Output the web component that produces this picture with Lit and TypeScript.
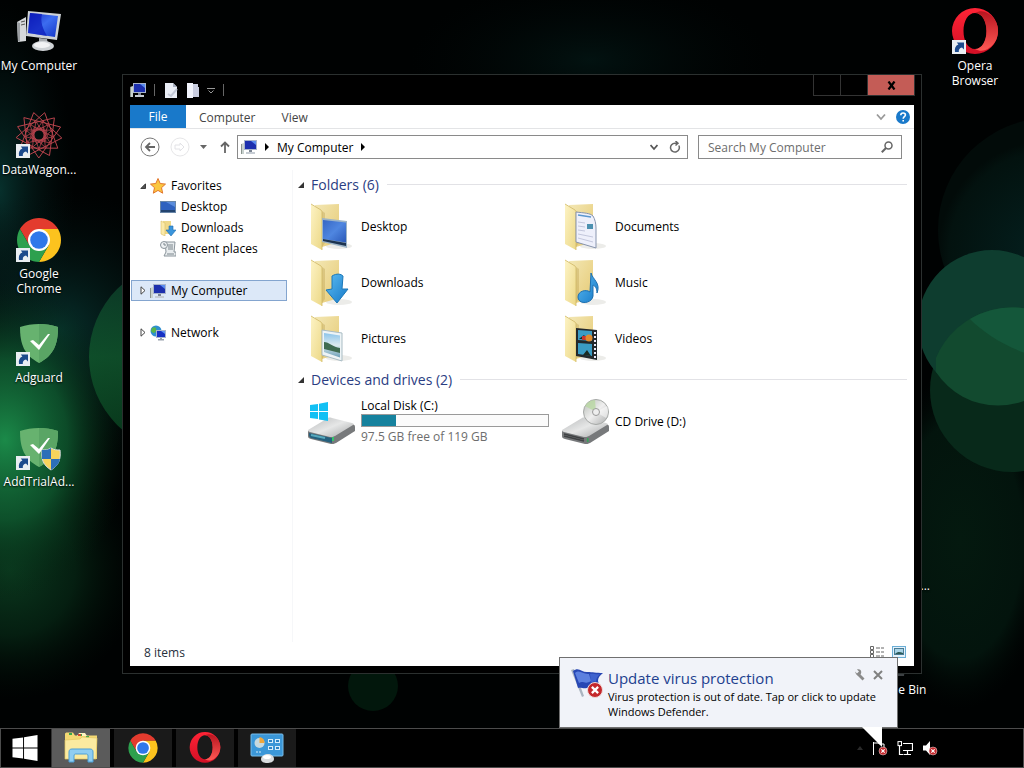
import { LitElement, html, svg, css, TemplateResult } from "lit";
import { customElement } from "lit/decorators.js";

const box = (size: number, view: number, body: unknown) =>
  html`<svg class="ico" width=${size} height=${size} viewBox="0 0 ${view} ${view}" aria-hidden="true">${body}</svg>`;

/* ---------- shared artwork ---------- */

const shortcut = svg`<rect x="1" y="32" width="14" height="14" fill="#e9eef2"/>
  <path d="M4 44c-.6-4 .6-6.600 3.400-7.600L5.800 34.600H13v7l-2-2C8.600 40 7.600 41.400 7.800 44z" fill="#1c4a8c"/>`;

const bigPc = svg`
  <path d="M2 14l9-5v24l-8 1z" fill="#d5d8da"/><path d="M2 14l3 1v19l-2-1z" fill="#9b9fa3"/>
  <path d="M6 14l4-1M6 17l4-1" stroke="#555" stroke-width="1"/>
  <path d="M24 30l8 1 1 6H24z" fill="#a8acb0"/>
  <ellipse cx="28" cy="38" rx="11" ry="5" fill="#cfd3d6"/><ellipse cx="27" cy="37" rx="8" ry="3" fill="#f2f3f4"/>
  <path d="M13 3l33 3-4 26-31-4z" fill="#cdd2d6"/><path d="M15 5l28 3-3 21-27-4z" fill="url(#screen)"/>
  <path d="M15 5l12 1c-2 8 1 15 5 22l-19-3z" fill="#0a18b8" opacity=".7"/>`;

const star = (n: number, step: number, r: number) =>
  Array.from({ length: n + 1 }, (_, i) => {
    const a = (i * step * 2 * Math.PI) / n + 0.13;
    return `${(24 + r * Math.cos(a)).toFixed(1)},${(23 + r * Math.sin(a)).toFixed(1)}`;
  }).join(" ");

const wagon = svg`<g fill="none" stroke="#b8434c">
  <polyline points=${star(13, 4, 23)} stroke-width="1"/>
  <polyline points=${star(13, 5, 14)} stroke-width=".8"/>
  <polyline points=${star(11, 3, 9)} stroke-width=".8"/></g>${shortcut}`;

const chromeMark = svg`<g transform="translate(24 24)">
  <path d="M-19.050-11A22 22 0 0 1 19.050-11H0L-9.530 5.500z" fill="#e33b2e"/>
  <path d="M19.050-11A22 22 0 0 1 0 22L9.530 5.500 0-11z" fill="#fcc31e"/>
  <path d="M0 22A22 22 0 0 1-19.050-11L-9.530 5.500H9.530z" fill="#2da04e"/>
  <circle r="11" fill="#fff"/><circle r="8.800" fill="#2f78ea"/></g>`;

const operaMark = svg`<path fill-rule="evenodd" fill="url(#opera)" d="M24 0a23 23 0 1 0 0 46 23 23 0 0 0 0-46zM24 5c7 0 11.500 8 11.500 18S31 41 24 41s-11.500-8-11.500-18S17 5 24 5z"/>
  <path d="M24 5c5-3 10-2 14 1 6 4 9 10 9 17s-3 13-9 17c-4 3-9 4-14 1 7 0 11.500-8 11.500-18S31 5 24 5z" fill="url(#operaSide)"/>`;

const shield = svg`<path d="M24 4c7 0 13 1 19 3 0 17-4 28-19 36C9 35 5 24 5 7c6-2 12-3 19-3z" fill="#67b26f"/>
  <path d="M24 4c7 0 13 1 19 3 0 17-4 28-19 36z" fill="#5aa565"/>
  <path d="M15 21l3-1 6 5 9-11h2L24 30z" fill="#fff"/>`;

const uac = svg`<path d="M36 24c3 2 6 2 9 2 1 9-1 15-9 20-8-5-10-11-9-20 3 0 6 0 9-2z" fill="#f7d45c" stroke="#d7dde4" stroke-width="1"/>
  <path d="M36 24v11h-9c0-3-.4-6 0-9 3 0 6 0 9-2zM36 35h9c-1 5-4 8-9 11z" fill="#2d6fb8"/>`;

const pc = svg`<path d="M0 5l3-1v11H0z" fill="#c9d2cf"/><path d="M0 5h1v10H0z" fill="#8b9590"/>
  <rect x="3.500" y="1.500" width="12" height="9" fill="#1c2fae" stroke="#a8b4cc"/>
  <path d="M10 2h5v4z" fill="#5a8cf0"/><rect x="8" y="11" width="3" height="2" fill="#7d8694"/>
  <rect x="5" y="13" width="9" height="2" fill="#c6ccd3"/>`;

const folderBase = svg`<ellipse cx="32" cy="44" rx="13" ry="3" fill="#cfcfc8" opacity=".4"/>
  <path d="M8 3l24-1v38l-17 5z" fill="url(#folderBack)"/>
  <path d="M15 9l3 2v30l-3 4z" fill="#b89a48" opacity=".35"/>
  <path d="M4 2l10 6c1 1 1 2 1 4v36L4 42z" fill="url(#folderFront)"/>
  <path d="M4 2l10 6c1 1 1 2 1 4v36" fill="none" stroke="#cfb765" stroke-width=".8"/>`;

const folderArt: Record<string, unknown> = {
  Desktop: svg`<path d="M15 16l25 3v27l-25-6z" fill="#9db4c6"/><path d="M16 18l23 2.500v20L16 37z" fill="url(#desk)"/>
    <path d="M16 37l23 4v3L16 39z" fill="#1c3350"/>`,
  Documents: svg`<path d="M15 10c8 1 14 1 17 4 2 3 3 8 3 12v20l-20-6z" fill="#eef0fb" stroke="#8794ad"/>
    <path d="M17 13l13 2" stroke="#5a97cf" stroke-width="1.500"/><rect x="26" y="22" width="6" height="5" fill="#4d91b0"/>
    <path d="M17 20l7 1M17 24l7 1M17 28l7 1M17 32l15 3M17 36l15 4" stroke="#c3c7dc"/>`,
  Downloads: svg`<path d="M25 18c5-3 9-2 11 0l-1 13h6L30 45 19 32l6-1z" fill="url(#blue)" stroke="#1c78b8"/>`,
  Music: svg`<path d="M30 15c2 7 10 10 6 20 0-5-2-7-4-8v11c-1 8-15 9-15 1 0-6 8-8 12-5z" fill="url(#blue)" stroke="#1c6faf"/>`,
  Pictures: svg`<path d="M15 16l20 3v28l-20-6z" fill="#eef4f6" stroke="#a9bcc4"/><path d="M17 19l16 2.500v22L17 38z" fill="url(#sky)"/>
    <path d="M17 28c5 0 9 5 16 6v5L17 35z" fill="#3f6c52"/>`,
  Videos: svg`<path d="M15 14l21 2v30l-21-4z" fill="#23292c"/><path d="M17 16l14 1v10l-14-1zM17 29l14 1v12l-14-2z" fill="#3a9cc4"/>
    <path d="M18 25l5-4 3 4zM22 41l4-5 4 6z" fill="#1a2b22"/><rect x="21" y="22" width="4" height="4" fill="#c8382e"/><circle cx="28" cy="24" r="3.500" fill="#e08b2c"/>
    <path d="M34 18v26" stroke="#eef" stroke-width="2" stroke-dasharray="2 2"/>`,
};

const driveBody = svg`<path d="M1 34l20-12c1-.6 2-.6 4 0l20 5c2 .6 3 1 3 3v4L29 46c-2 1-3 1-5 1L4 42c-2-.5-3-1-3-3z" fill="#77797b"/>
  <path d="M1 33l20-12c1-.6 2-.6 4 0l20 5c2 .6 2 1.500 1 2L28 39c-2 1-3 1-5 1L3 35c-2-.5-2-1-2-2z" fill="url(#metal)"/>`;

const hardDisk = svg`${driveBody}
  <path d="M2 36l23 5v5L4 41c-2-1-2-2-2-5z" fill="#24607e"/><path d="M4 38l14 3" stroke="#57a9bd" stroke-width="2"/>
  <rect x="25" y="40" width="2" height="4" fill="#36c46a"/>
  <path d="M3 8l8-1v7H3zM12 6.800L21 5v9h-9zM3 15h8v7l-8-1zM12 15h9v9l-9-1.500z" fill="#12c0f4"/>`;

const cdDrive = svg`${driveBody}<path d="M3 37l20 5M3 39l20 5" stroke="#3f4244" stroke-width="1.500"/>
  <rect x="26" y="41" width="1.500" height="4" fill="#36a45a"/>
  <circle cx="35" cy="15" r="12.500" fill="url(#disc)" stroke="#a5a8a6"/><path d="M35 15L24 9c2-3 5-6 10-6z" fill="#b9d8a2" opacity=".8"/>
  <path d="M35 15l11-6c2 4 1 9-1 12z" fill="#fff" opacity=".5"/><circle cx="35" cy="15" r="3.500" fill="#eee" stroke="#999"/>`;

const sideArt: Record<string, unknown> = {
  Favorites: svg`<path d="M8 .5l2.200 5 5.300.6-4 3.600 1.200 5.500L8 12.400l-4.700 2.800 1.200-5.500-4-3.600 5.300-.6z" fill="#fbc740" stroke="#e2762c"/>`,
  Desktop: svg`<rect x=".5" y="2.500" width="15" height="11" fill="#2f62bf" stroke="#6886a8"/><path d="M1 11h14v2H1z" fill="#23446f"/><path d="M6 3h9v5z" fill="#5a8cdc"/>`,
  Downloads: svg`<path d="M3 1h8v13H3z" fill="#efd98a"/><path d="M1 1l4 2v13l-4-2z" fill="#fbeaa8" stroke="#d9bf6a" stroke-width=".6"/>
    <path d="M9 6h4v4h3l-5 6-5-6h3z" fill="#3a95dc" stroke="#1e6db0" stroke-width=".6"/>`,
  "Recent places": svg`<path d="M5 1h10l-1 10h2v4H4l2-4z" fill="#e8ecee" stroke="#8a949b"/><circle cx="4" cy="4" r="3.500" fill="#eef1f3" stroke="#8a949b"/>
    <path d="M4 2v2h2M8 4h5M8 6h5M8 8h5M7 13h7" stroke="#7b858c" fill="none"/>`,
  "My Computer": pc,
  Network: svg`<circle cx="6" cy="6" r="5.500" fill="#2f8fd0"/><path d="M2 3c3-2 5 0 4 3s-4 2-5 0M7 8c3-1 3 2 1 3z" fill="#58b64a"/>
    <rect x="6.500" y="5.500" width="9" height="7" fill="#1730c4" stroke="#a8b4cc"/><path d="M11 6h4v3z" fill="#5f93f4"/><path d="M10 13h2v1h2v1.500H8V14h2z" fill="#9aa2ad"/>`,
};

const badge = (x: number, y: number, r: number) => svg`<g transform="translate(${x} ${y}) scale(${r / 6})">
  <circle r="6" fill="#c4282c" stroke="#efd9d9" stroke-width=".8"/><path d="M-2.500-2.500l5 5m0-5l-5 5" stroke="#fff" stroke-width="1.800"/></g>`;

const explorerMark = svg`<path d="M1 3c0-1 1-1.500 2-1.500h6l2 3H33V28H1z" fill="#f3d873"/>
  <path d="M13 5l2-3h6l2 3z" fill="#fff3c0"/><path d="M5 3h3M15 4h3M22 6h3" stroke="#3aa84a" stroke-width="2"/><path d="M14 4h3" stroke="#d2452e" stroke-width="2"/>
  <path d="M1 9l15-1 2-2 15 1-1 21H1z" fill="#fbeaa0" stroke="#e3c55e" stroke-width=".7"/>
  <path d="M5 31V21c0-2 1-3 3-3h18c2 0 3 1 3 3v10h-5v-6c0-2-1-2-2-2H12c-1 0-2 0-2 2v6z" fill="#8fcdf1" stroke="#4c9fd6"/>`;

const panelMark = svg`<rect x="1" y="3" width="32" height="22" rx="1" fill="#3b97d8" stroke="#79bdea"/>
  <circle cx="9.500" cy="12" r="5" fill="#c7d9df"/><path d="M9.500 12V6a6 6 0 0 1 5 6z" fill="#f0a63a"/>
  <g fill="#2b83c4" stroke="#d5ecfa"><rect x="18.500" y="8.500" width="4" height="3"/><rect x="25.500" y="8.500" width="4" height="3"/><rect x="18.500" y="15.500" width="4" height="3"/><rect x="25.500" y="15.500" width="4" height="3"/></g>
  <path d="M6 21h6" stroke="#d5ecfa" stroke-dasharray="2 1"/>
  <path d="M11 28c0-3 4-5 7-5s6 2 6 5-4 4-7 4-6-1-6-4z" fill="#d9dcde"/><ellipse cx="17" cy="26" rx="4" ry="2" fill="#fff"/>`;

const winMark = svg`<path d="M0 4l11-1.500V13H0zM12 2.300L26 0v13H12zM0 14h11v10.500L0 23zM12 14h14v13l-14-2.300z" fill="#fff"/>`;

const bigFlag = svg`<path d="M0 3l3-1 10 27-2 1z" fill="#aab4c0"/>
  <path d="M2 4c6-5 9 2 15 1 4 0 8 1 15 1-5 4-6 7-4 11-5-2-7 3-12 4-4 1-6-1-9 0z" fill="#2747b4"/>
  <path d="M4 6c5-4 8 2 14 1l2 7c-6 4-8-1-12 2z" fill="#6f93ee" opacity=".75"/>
  <path d="M19 7c3-1 6 1 10 0-3 3-4 5-4 8-2-1-3 0-5 1z" fill="#4a6fd8" opacity=".7"/>${badge(24, 23, 7.5)}`;

/* ---------- data ---------- */

const leftIcons: [string, unknown][] = [
  ["My Computer", bigPc],
  ["DataWagon...", wagon],
  ["Google Chrome", svg`${chromeMark}${shortcut}`],
  ["Adguard", svg`${shield}${shortcut}`],
  ["AddTrialAd...", svg`${shield}${uac}${shortcut}`],
];

const folders = ["Desktop", "Documents", "Downloads", "Music", "Pictures", "Videos"];

const places: { name: string; level: number; mark: string; gap?: boolean; on?: boolean }[] = [
  { name: "Favorites", level: 0, mark: "open" },
  { name: "Desktop", level: 1, mark: "" },
  { name: "Downloads", level: 1, mark: "" },
  { name: "Recent places", level: 1, mark: "" },
  { name: "My Computer", level: 0, mark: "shut", gap: true, on: true },
  { name: "Network", level: 0, mark: "shut", gap: true },
];

const disk = { size: 119, free: 97.5 };

@customElement("app-root")
export class AppRoot extends LitElement {
  static styles = css`
    :host { display: flex; flex-direction: column; position: relative; height: 100vh; overflow: hidden; background: #000;
      font: 12px/15px "Open Sans", "Noto Sans", sans-serif; color: #000; }
    * { box-sizing: border-box; }
    button, input { font: inherit; color: inherit; padding: 0; margin: 0; border: 0; background: none; }
    a { color: inherit; text-decoration: none; }
    h1, h2, p, ul { margin: 0; padding: 0; font-weight: 400; list-style: none; }
    svg { display: block; flex: none; }
    .defs { position: absolute; }
    .wall { position: absolute; inset: 0; width: 100%; height: 100%; }
    .desktop { position: relative; flex: 1; min-height: 0; display: grid; grid-template-columns: 78px 1fr 78px 78px;
      column-gap: 2px; grid-template-rows: repeat(7, 104px); padding-right: 10px; }
    .shortcut { display: flex; flex-direction: column; align-items: center; justify-content: flex-start; padding-top: 8px; gap: 2px;
      color: #fff; text-align: center; text-shadow: 0 1px 2px #000; }
    .shortcut span { max-width: 78px; }
    .edge span { align-self: flex-end; padding: 50px 4px 0 0; }
    .c1 { grid-column: 1; } .c3 { grid-column: 3; } .c4 { grid-column: 4; }
    .r1 { grid-row: 1; } .r6 { grid-row: 6; } .r7 { grid-row: 7; }

    .window { position: absolute; inset: 74px 102px 54px 122px; display: flex; flex-direction: column; background: #000;
      border: 1px solid #2b302f; padding: 0 6px 7px 7px; }
    .titlebar { display: flex; height: 30px; flex: none; align-items: flex-start; }
    .quick { display: flex; align-items: center; height: 30px; gap: 8px; flex: 1; }
    .bar { width: 1px; height: 12px; background: #666; }
    .caption { display: flex; height: 21px; border: 1px solid #333; border-top: 0; }
    .caption button { width: 27px; border-right: 1px solid #333; }
    .caption .close { width: 46px; border: 0; background: #c45c56; display: grid; place-items: center; }
    .client { flex: 1; min-height: 0; background: #fff; display: flex; flex-direction: column; margin-right: 1px; }
    .tabs { display: flex; height: 24px; flex: none; border-bottom: 1px solid #e3e4e6; color: #444; align-items: stretch; }
    .tabs button { padding: 2px 13px 0; }
    .tabs .file { width: 56px; padding: 0; background: #1979ca; color: #fff; }
    .tools { margin-left: auto; display: flex; align-items: center; gap: 10px; padding-right: 4px; }
    .tools button { padding: 0; }
    .navbar { display: flex; align-items: center; height: 41px; flex: none; padding: 6px 12px 11px 10px; }
    .moves { display: flex; align-items: center; gap: 10px; width: 97px; }
    .address { flex: 1; height: 24px; border: 1px solid #8a8a8a; display: flex; align-items: center; gap: 8px; padding: 0 6px 0 3px; }
    .address .end { margin-left: auto; display: flex; gap: 11px; align-items: center; }
    .search { width: 204px; height: 24px; margin-left: 10px; border: 1px solid #8a8a8a; display: flex; align-items: center; padding: 0 8px 0 9px; }
    .search input { flex: 1; min-width: 0; outline: 0; }
    .search input::placeholder { color: #6d6d6d; opacity: 1; }
    .body { flex: 1; min-height: 0; display: flex; }
    .side { width: 163px; flex: none; border-right: 1px solid #f6f7f9; padding: 5px 5px 0 1px; }
    .place { display: flex; align-items: center; height: 21px; gap: 5px; padding-left: 8px; border: 1px solid transparent; }
    .level1 { padding-left: 18px; }
    .gap { margin-top: 21px; }
    .on { background: #dce8f8; border-color: #84a5cf; }
    .twist { width: 6px; margin-right: -1px; }
    .main { flex: 1; min-width: 0; padding: 1px 7px 0 5px; }
    .group { display: flex; align-items: center; height: 27px; gap: 8px; }
    .group h2 { font-size: 14px; line-height: 20px; color: #2b3d82; }
    .group hr { flex: 1; border: 0; border-top: 1px solid #e2e2e6; margin: 0; }
    .group svg { margin-right: -1px; }
    .tiles { display: grid; grid-template-columns: repeat(auto-fill, 254px); grid-auto-rows: 56px; padding-left: 9px; }
    .tile { display: flex; align-items: center; gap: 6px; }
    .info { width: 188px; }
    .meter { height: 13px; border: 1px solid #9a9a9a; background: #fbfbfb; margin: 1px 0 2px; }
    .fill { height: 100%; background: #16829e; }
    .muted { color: #6d6d6d; }
    .status { flex: none; height: 24px; display: flex; align-items: center; justify-content: space-between; padding: 0 8px 4px 14px; color: #26303c; }
    .views { display: flex; gap: 7px; align-items: center; }

    .taskbar { position: relative; flex: none; height: 40px; display: flex; background: #000; border: 1px solid #4c4c4c; }
    .apps { display: flex; gap: 4px; flex: 1; }
    .apps button { width: 58px; display: grid; place-items: center; background: #1a1a1a; }
    .apps .active { background: #5b5b5b; }
    .start { width: 51px; display: grid; place-items: center; border-right: 1px solid #333; padding-right: 2px; }
    .tray { display: flex; align-items: center; gap: 9px; padding-right: 85px; }
    .toast { position: absolute; right: 126px; bottom: 40px; width: 339px; display: flex; gap: 3px; padding: 9px 8px 8px 11px;
      background: #f1f3f9; border: 1px solid #707070; }
    .toast .words { flex: 1; }
    .toast h1 { font-size: 15px; line-height: 22px; color: #21408f; }
    .toast p { font-size: 11px; }
    .head { display: flex; justify-content: space-between; align-items: flex-start; }
    .acts { display: flex; gap: 8px; padding: 2px 6px 0 0; }
    .tip { position: absolute; right: 15px; top: 100%; }
  `;

  private desk(name: string, art: unknown, place: string) {
    return html`<button class="shortcut ${place}">${box(48, 48, art)}<span>${name}</span></button>`;
  }

  private twist(mark: string): TemplateResult {
    if (mark === "open")
      return html`<svg class="twist" width="6" height="6" viewBox="0 0 6 6"><path d="M5.500.8v4.700H.8z" fill="#555" stroke="#222" stroke-width=".8"/></svg>`;
    return html`<svg class="twist" width="6" height="9" viewBox="0 0 6 9"><path d="M1 .8v7.400L5 4.500z" fill="#fff" stroke="#444"/></svg>`;
  }

  private group(title: string) {
    return html`<div class="group">
      <svg width="6" height="6" viewBox="0 0 6 6"><path d="M6 0v6H0z" fill="#333"/></svg><h2>${title}</h2><hr /></div>`;
  }

  private wallpaper() {
    return html`<svg class="wall" viewBox="0 0 1024 768" preserveAspectRatio="none" aria-hidden="true">
      <defs>
        <radialGradient id="g1"><stop offset="0" stop-color="#1b8a49"/><stop offset=".5" stop-color="#0f5b30" stop-opacity=".8"/><stop offset="1" stop-color="#04200f" stop-opacity="0"/></radialGradient>
        <radialGradient id="g2"><stop offset="0" stop-color="#07302c"/><stop offset="1" stop-color="#03100f" stop-opacity="0"/></radialGradient>
        <linearGradient id="g3" x1="0" y1="0" x2="0" y2="1"><stop offset="0" stop-color="#0c3a29"/><stop offset=".5" stop-color="#10552c"/><stop offset="1" stop-color="#083c1d"/></linearGradient>
        <radialGradient id="g4"><stop offset="0" stop-color="#04190f"/><stop offset=".7" stop-color="#03140d"/><stop offset="1" stop-color="#010705" stop-opacity="0"/></radialGradient>
        <radialGradient id="g5" cx=".5" cy=".6"><stop offset="0" stop-color="#04201f"/><stop offset=".9" stop-color="#03120f"/><stop offset="1" stop-color="#020b09"/></radialGradient>
      </defs>
      <rect width="1024" height="768" fill="#000202"/>
      <ellipse cx="0" cy="190" rx="75" ry="190" fill="url(#g2)"/>
      <ellipse cx="60" cy="330" rx="150" ry="140" fill="url(#g2)"/>
      <ellipse cx="590" cy="60" rx="180" ry="80" fill="url(#g2)" opacity=".35"/>
      <ellipse cx="10" cy="570" rx="130" ry="130" fill="url(#g1)" opacity=".4"/>
      <ellipse cx="5" cy="440" rx="125" ry="160" fill="url(#g1)"/>
      <circle cx="185" cy="357" r="96" fill="url(#g3)" opacity=".85"/>
      <circle cx="1050" cy="230" r="112" fill="url(#g5)"/>
      <ellipse cx="960" cy="540" rx="90" ry="170" fill="url(#g4)"/>
      <circle cx="1012" cy="390" r="82" fill="#08291a"/>
      <circle cx="992" cy="324" r="74" fill="#0e3d2f"/>
      <path d="M936 358A82 82 0 0 1 1060 323V372A74 74 0 0 1 936 372z" fill="#124a2f"/>
      <path d="M970 319A82 82 0 0 1 1060 323V360C1030 360 990 340 970 319z" fill="#14573a"/>
      <circle cx="373" cy="686" r="25" fill="#02170c"/>
    </svg>`;
  }

  render() {
    return html`
      <svg class="defs" width="0" height="0" aria-hidden="true"><defs>
        <linearGradient id="screen" x1="0" y1="0" x2="1" y2="1"><stop offset="0" stop-color="#1226c4"/><stop offset=".5" stop-color="#3c6cf0"/><stop offset="1" stop-color="#1436c8"/></linearGradient>
        <linearGradient id="opera" x1="0" y1="0" x2="0" y2="1"><stop offset="0" stop-color="#ff2436"/><stop offset="1" stop-color="#d30f25"/></linearGradient>
        <linearGradient id="operaSide" x1="0" y1="0" x2="0" y2="1"><stop offset="0" stop-color="#b8141f"/><stop offset="1" stop-color="#ff5a55"/></linearGradient>
        <linearGradient id="folderBack" x1="0" y1="0" x2="1" y2="1"><stop offset="0" stop-color="#f3e7b4"/><stop offset="1" stop-color="#e6ca74"/></linearGradient>
        <linearGradient id="folderFront" x1="0" y1="0" x2="1" y2="1"><stop offset="0" stop-color="#fdf3c4"/><stop offset="1" stop-color="#ecd887"/></linearGradient>
        <linearGradient id="desk" x1="0" y1="0" x2="1" y2="1"><stop offset="0" stop-color="#3767c4"/><stop offset=".5" stop-color="#4f86e0"/><stop offset="1" stop-color="#2a58b8"/></linearGradient>
        <linearGradient id="blue" x1="0" y1="0" x2="1" y2="1"><stop offset="0" stop-color="#5dbcf2"/><stop offset="1" stop-color="#1579c8"/></linearGradient>
        <linearGradient id="sky" x1="0" y1="0" x2="0" y2="1"><stop offset="0" stop-color="#8cc4ea"/><stop offset=".5" stop-color="#dcebf0"/><stop offset="1" stop-color="#6c9fb8"/></linearGradient>
        <linearGradient id="metal" x1="0" y1="0" x2="1" y2="1"><stop offset="0" stop-color="#b8babb"/><stop offset=".5" stop-color="#e6e7e7"/><stop offset="1" stop-color="#a4a6a7"/></linearGradient>
        <linearGradient id="disc" x1="0" y1="0" x2="1" y2="1"><stop offset="0" stop-color="#b5bab2"/><stop offset=".5" stop-color="#efefef"/><stop offset="1" stop-color="#a9abab"/></linearGradient>
      </defs></svg>
      ${this.wallpaper()}
      <div class="desktop">
        ${leftIcons.map(([n, a], i) => html`<button class="shortcut c1" style="grid-row:${i + 1}">${box(48, 48, a)}<span>${n}</span></button>`)}
        ${this.desk("Opera Browser", svg`${operaMark}${shortcut}`, "c4 r1")}
        <button class="shortcut edge c3 r6"><span>...</span></button>
        ${this.desk("Recycle Bin", svg`<path d="M10 4h28l-5 40H15z" fill="#3c4043"/>`, "c3 r7")}

        <section class="window" aria-label="My Computer">
          <header class="titlebar">
            <div class="quick">
              ${box(16, 16, pc)}<span class="bar"></span>
              ${box(16, 16, svg`<path d="M2 1h8l4 4v11H2z" fill="#e9edf5"/><path d="M10 1v4h4z" fill="#a7afc0"/><path d="M5 12l3 2 6-7" stroke="#c2c8d6" stroke-width="2" fill="none"/>`)}
              <svg width="12" height="16" viewBox="0 0 12 16"><path d="M0 1h6v15H0z" fill="#f1f3fb"/><path d="M6 2h5v3h1v10H6z" fill="#c9cde0"/></svg>
              <svg width="8" height="8" viewBox="0 0 8 8"><path d="M0 2.500h8M1.500 4.500L4 7l2.500-2.500" stroke="#999" fill="none"/></svg>
              <span class="bar"></span>
            </div>
            <div class="caption">
              <button aria-label="Minimize"></button><button aria-label="Maximize"></button>
              <button class="close" aria-label="Close"><svg width="9" height="9" viewBox="0 0 9 9"><path d="M1.500.5l6 8m0-8l-6 8" stroke="#000" stroke-width="2.200"/></svg></button>
            </div>
          </header>
          <div class="client">
            <div class="tabs">
              <button class="file">File</button><button>Computer</button><button>View</button>
              <div class="tools">
                <button aria-label="Expand the ribbon"><svg width="10" height="8" viewBox="0 0 10 8"><path d="M1 1.500l4 4.500 4-4.500" stroke="#999" stroke-width="1.800" fill="none"/></svg></button>
                <button aria-label="Help"><svg width="14" height="14" viewBox="0 0 14 14"><circle cx="7" cy="7" r="7" fill="#1979ca"/><path d="M4.800 5.200c0-3 4.600-2.800 4.600-.2 0 1.600-2.200 1.800-2.200 3.800M7.200 10v1.600" stroke="#fff" stroke-width="1.600" fill="none"/></svg></button>
              </div>
            </div>
            <div class="navbar">
              <div class="moves">
                <button aria-label="Back"><svg width="20" height="20" viewBox="0 0 20 20"><circle cx="10" cy="10" r="9" fill="none" stroke="#777"/><path d="M15 10H6m4-4l-4 4 4 4" stroke="#666" stroke-width="1.800" fill="none"/></svg></button>
                <button aria-label="Forward"><svg width="20" height="20" viewBox="0 0 20 20"><circle cx="10" cy="10" r="9" fill="none" stroke="#e6e6e8"/><path d="M5 8h5V6l4 4-4 4v-2H5z" stroke="#e2e2e6" fill="none"/></svg></button>
                <button aria-label="Recent locations"><svg width="7" height="4" viewBox="0 0 7 4"><path d="M0 0h7L3.500 4z" fill="#666"/></svg></button>
                <button aria-label="Up"><svg width="18" height="12" viewBox="0 0 18 12"><path d="M8 12V1.500M4 5.500l4-4 4 4" stroke="#666" stroke-width="1.800" fill="none"/></svg></button>
              </div>
              <nav class="address">
                ${box(16, 16, pc)}
                <svg width="4" height="8" viewBox="0 0 4 8"><path d="M0 0l4 4-4 4z" fill="#000"/></svg>
                <a href="#">My Computer</a>
                <svg width="4" height="8" viewBox="0 0 4 8"><path d="M0 0l4 4-4 4z" fill="#000"/></svg>
                <div class="end">
                  <svg width="8" height="7" viewBox="0 0 8 7"><path d="M.5 1L4 5 7.500 1" stroke="#555" stroke-width="1.800" fill="none"/></svg>
                  <button aria-label="Refresh"><svg width="12" height="12" viewBox="0 0 12 12"><path d="M9.800 4.500A4.400 4.400 0 1 1 6 2.200h2M6.500 0L9 2.200 6.500 4.500" stroke="#666" stroke-width="1.500" fill="none"/></svg></button>
                </div>
              </nav>
              <label class="search"><input type="text" placeholder="Search My Computer" aria-label="Search My Computer" />
                <svg width="12" height="12" viewBox="0 0 12 12"><circle cx="7.500" cy="4.500" r="3.500" fill="none" stroke="#666" stroke-width="1.500"/><path d="M5 7L.8 11.200" stroke="#666" stroke-width="2"/></svg></label>
            </div>
            <div class="body">
              <nav class="side">
                ${places.map((p) => html`<a href="#" class="place level${p.level} ${p.gap ? "gap" : ""} ${p.on ? "on" : ""}">
                  ${p.mark ? this.twist(p.mark) : html`<span class="twist"></span>`}${box(16, 16, sideArt[p.name])}<span>${p.name}</span></a>`)}
              </nav>
              <div class="main">
                ${this.group("Folders (6)")}
                <div class="tiles">${folders.map((f) => html`<a href="#" class="tile">${box(48, 48, svg`${folderBase}${folderArt[f]}`)}<span>${f}</span></a>`)}</div>
                ${this.group("Devices and drives (2)")}
                <div class="tiles">
                  <a href="#" class="tile">${box(48, 48, hardDisk)}<div class="info">
                    <div>Local Disk (C:)</div>
                    <div class="meter"><div class="fill" style="width:${((disk.size - disk.free) / disk.size) * 100}%"></div></div>
                    <div class="muted">${disk.free} GB free of ${disk.size} GB</div></div></a>
                  <a href="#" class="tile">${box(48, 48, cdDrive)}<span>CD Drive (D:)</span></a>
                </div>
              </div>
            </div>
            <footer class="status"><span>8 items</span>
              <div class="views">
                <button aria-label="Details"><svg width="16" height="12" viewBox="0 0 16 12"><path d="M1.500.5h3v3h-3zM1.500 4.500h3v3h-3zM1.500 8.500h3v3h-3zM7 2h4M12 2h3M7 6h4M12 6h3M7 10h4M12 10h3" stroke="#666" fill="none"/></svg></button>
                <button aria-label="Large icons"><svg width="14" height="12" viewBox="0 0 14 12"><rect x=".5" y=".5" width="13" height="11" fill="#e6f2fb" stroke="#6aaed6"/><rect x="2.500" y="2.500" width="9" height="6" fill="#a9d3e6" stroke="#4a7c94"/><path d="M3 8c3-3 5-2 8-1v1z" fill="#2c5a58"/></svg></button>
              </div>
            </footer>
          </div>
        </section>
      </div>

      <div class="taskbar">
        <button class="start" aria-label="Start"><svg width="26" height="26" viewBox="0 0 26 27">${winMark}</svg></button>
        <div class="apps">
          <button class="active" aria-label="File Explorer">${box(34, 34, explorerMark)}</button>
          <button aria-label="Google Chrome">${box(32, 48, chromeMark)}</button>
          <button aria-label="Opera">${box(32, 48, operaMark)}</button>
          <button aria-label="Control Panel">${box(34, 34, panelMark)}</button>
        </div>
        <div class="tray">
          <svg width="6" height="4" viewBox="0 0 6 4"><path d="M0 4l3-4 3 4z" fill="#2a2a2a"/></svg>
          ${box(16, 16, svg`<path d="M1.500 2v13M2 3h4l2 1h4v5" stroke="#fff" fill="none"/>${badge(11, 11, 4)}`)}
          ${box(16, 16, svg`<path d="M6 3.500h9.500v7H6M10.500 11v3M7 14.500h7M2.500 6v8.500h4" stroke="#fff" fill="none" stroke-width="1.200"/><rect x="1" y="1.600" width="3.500" height="4" fill="none" stroke="#fff"/>`)}
          ${box(16, 16, svg`<path d="M1 5.500h3L8 1v14l-4-4.500H1z" fill="#fff"/>${badge(11, 11, 4)}`)}
        </div>
      </div>

      <aside class="toast" role="alert">
        ${box(34, 34, bigFlag)}
        <div class="words">
          <div class="head"><h1>Update virus protection</h1>
            <div class="acts">
              <button aria-label="Options"><svg width="11" height="12" viewBox="0 0 11 12"><path d="M3.500 4.500l6 6" stroke="#8a8a8a" stroke-width="2.800"/><path d="M1 2.500l2 2 2-2-2-2c3-1 5 1 4 4S2 7 1 2.500z" fill="#8a8a8a"/></svg></button>
              <button aria-label="Dismiss"><svg width="10" height="10" viewBox="0 0 10 10"><path d="M1 1l8 8m0-8L1 9" stroke="#808080" stroke-width="2"/></svg></button>
            </div></div>
          <p>Virus protection is out of date. Tap or click to update Windows Defender.</p>
        </div>
        <svg class="tip" width="20" height="20" viewBox="0 0 20 20"><path d="M0 0h20v20z" fill="#fff"/></svg>
      </aside>
    `;
  }
}
